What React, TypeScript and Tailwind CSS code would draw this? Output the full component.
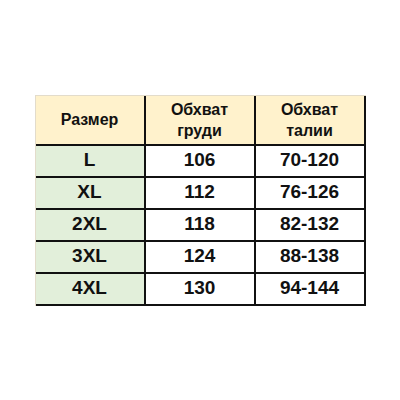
import { Fragment } from "react";

const rows = [
  ["L", "106", "70-120"],
  ["XL", "112", "76-126"],
  ["2XL", "118", "82-132"],
  ["3XL", "124", "88-138"],
  ["4XL", "130", "94-144"],
];

const cell = "flex items-center justify-center text-center border-r-2 border-b-2 border-[#111]";

export default function App() {
  return (
    <div
      className="w-[400px] h-[400px] bg-white flex items-center justify-center text-[#111] font-bold"
      style={{ fontFamily: '"Liberation Sans", Arial, sans-serif' }}
    >
      <div className="grid grid-cols-[110px_110px_110px] border-t border-l border-[#e3dccb]">
        <div className={`${cell} h-[50px] bg-[#fff2cc] text-[16px]`}>Размер</div>
        <div className={`${cell} h-[50px] bg-[#fff2cc] text-[16px] leading-[21px]`}>
          Обхват
          <br />
          груди
        </div>
        <div className={`${cell} h-[50px] bg-[#fff2cc] text-[16px] leading-[21px]`}>
          Обхват
          <br />
          талии
        </div>
        {rows.map((r) => (
          <Fragment key={r[0]}>
            <div className={`${cell} h-[32px] bg-[#e2efda] text-[19px]`}>{r[0]}</div>
            <div className={`${cell} h-[32px] bg-white text-[19px]`}>{r[1]}</div>
            <div className={`${cell} h-[32px] bg-white text-[19px]`}>{r[2]}</div>
          </Fragment>
        ))}
      </div>
    </div>
  );
}
